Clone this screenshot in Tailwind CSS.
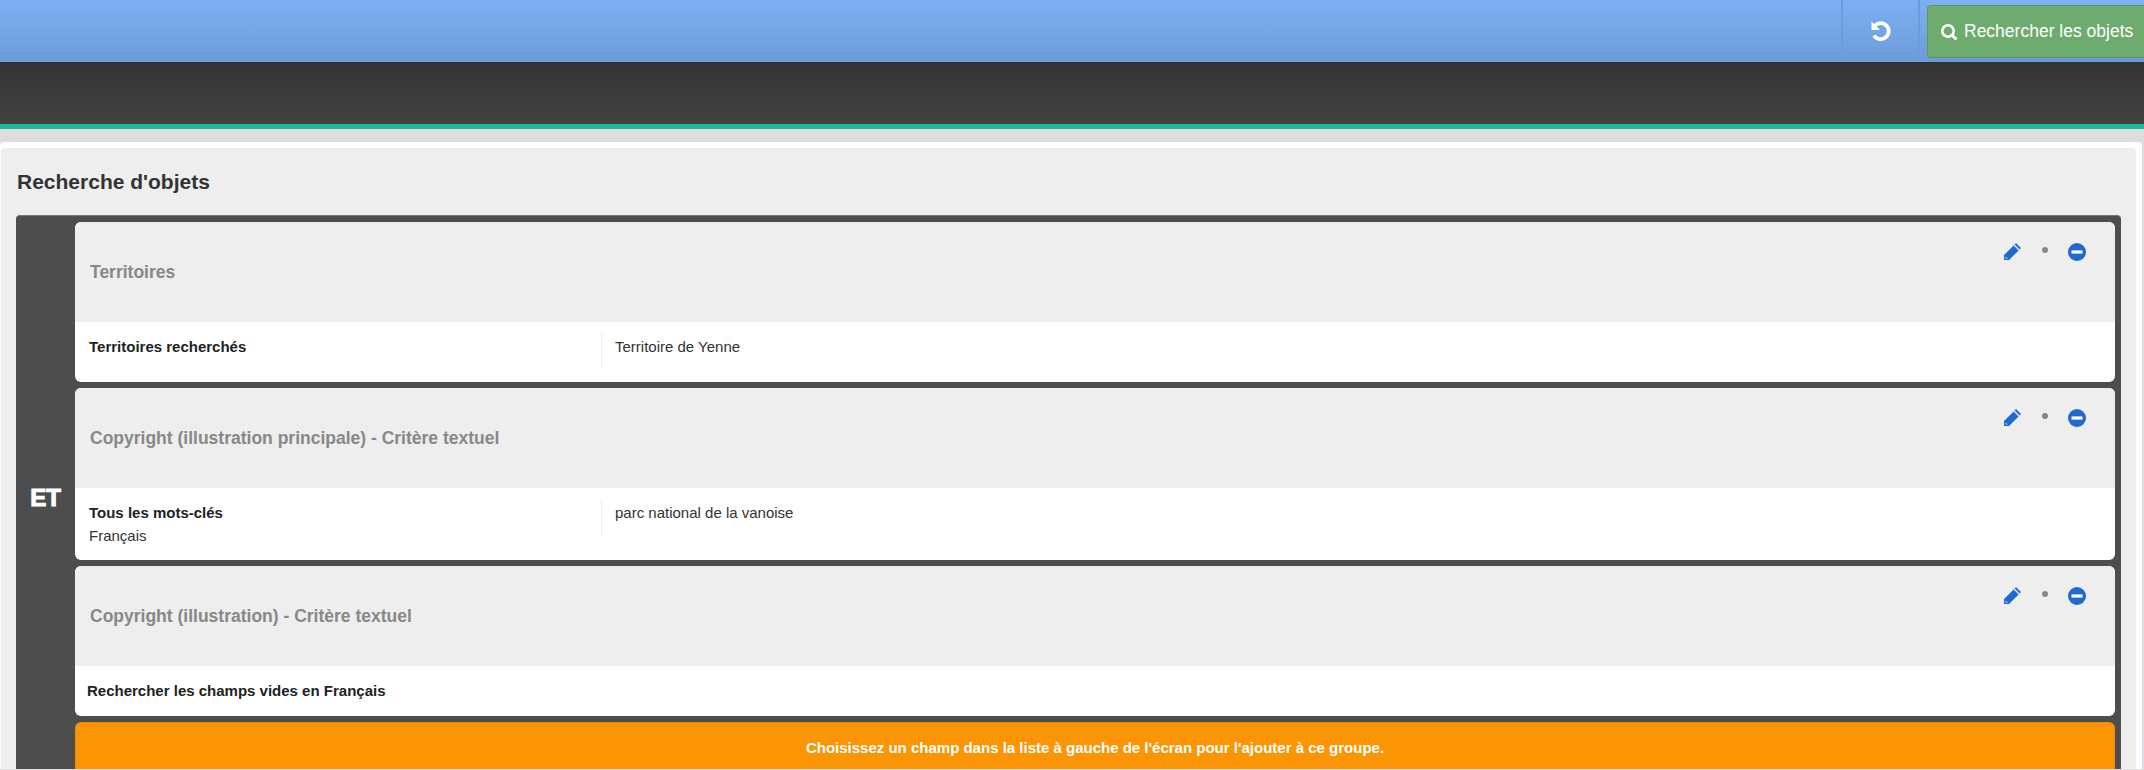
<!DOCTYPE html>
<html lang="fr">
<head>
    <meta charset="UTF-8">
    <title>Recherche d'objets</title>
    <script src="https://cdn.jsdelivr.net/npm/@tailwindcss/browser@4"></script>
</head>
<body class="h-[770px] overflow-hidden bg-[#ddd] font-['Liberation_Sans',Arial,sans-serif] text-[#333]">
    <!-- top bar -->
    <div class="h-[62px] flex justify-end bg-gradient-to-b from-[#7db0f2] to-[#6c9bd9]">
        <div class="w-[75px] h-full border-l-2 border-r-2 border-[#6a9de0] flex items-center justify-center box-content">
            <svg class="w-[22px] h-[22px]" viewBox="0 0 22 22" fill="none" stroke="white" stroke-width="3.8">
                <path d="M5 5.5 A8 8 0 1 1 4 15.5"/>
                <path d="M1.5 1.5 L1.5 10 L10 10 Z" fill="white" stroke="none"/>
            </svg>
        </div>
        <div class="pl-[7px] pt-[5px]">
            <button class="w-[217px] h-[53px] pl-[12px] flex items-center gap-[6px] bg-[#6eab6e] border border-[#5c9a5c] border-r-0 rounded-l-[4px] text-white text-[17.5px]">
                <svg class="w-[18px] h-[18px]" viewBox="0 0 18 18" fill="none" stroke="white">
                    <circle cx="8" cy="8" r="5.7" stroke-width="2.6"/>
                    <path d="M12.2 12.2 L16.5 16.5" stroke-width="3"/>
                </svg>
                Rechercher les objets
            </button>
        </div>
    </div>

    <!-- dark band -->
    <div class="h-[67px] bg-gradient-to-b from-[#333] to-[#424242] border-b-[5px] border-[#1abc9c]"></div>

    <!-- panel -->
    <div class="mt-[13px] mr-[2px] bg-white pt-[6px] pr-[6px] pl-[1px] rounded-t-[4px]">
        <div class="bg-[#eee] rounded-t-[4px] pl-[15px] pr-[15px]">
            <h2 class="h-[67px] flex items-center pl-[1px] text-[21px] font-bold leading-none">Recherche d'objets</h2>

            <div class="flex bg-[#4d4d4d] border-t border-[#777] rounded-t-[4px] pr-[6px] pt-[6px]">
                <div class="w-[59px] shrink-0 flex items-start justify-center pt-[264px]">
                    <span class="text-white text-[24px] font-black leading-none [-webkit-text-stroke:1px_white]">ET</span>
                </div>

                <div class="flex-1 flex flex-col gap-[6px]">
                    <!-- Territoires -->
                    <div class="rounded-[6px] overflow-hidden bg-white">
                        <div class="h-[100px] bg-[#eee] flex items-center justify-between pl-[15px]">
                            <h3 class="text-[17.5px] font-bold text-[#888]">Territoires</h3>
                            <div class="self-start pt-[20px] pr-[29px] flex items-center">
                                <svg class="w-[19px] h-[19px]" viewBox="0 0 19 19" fill="#1f69d0"><path d="M13 1 L18 6 L16.6 7.4 L11.6 2.4 Z M10.6 3.4 L15.6 8.4 L6 18 L1 18 L1 13 Z"/><path d="M2.6 14.5 L4.5 16.4 L2.6 16.4 Z" fill="white"/></svg>
                                <span class="w-[6px] h-[6px] rounded-full bg-[#888] mx-[20px] -mt-[3px]"></span>
                                <svg class="w-[18px] h-[18px]" viewBox="0 0 18 18"><circle cx="9" cy="9" r="9" fill="#1f69d0"/><rect x="3.5" y="7.4" width="11" height="3.2" fill="white"/></svg>
                            </div>
                        </div>
                        <div class="h-[60px] flex pt-[11px]">
                            <div class="w-[527px] h-[36px] pl-[14px] pt-[3px] border-r border-[#eee] text-[15px] font-bold text-[#222]">Territoires recherchés</div>
                            <div class="pl-[13px] pt-[3px] text-[15px]">Territoire de Yenne</div>
                        </div>
                    </div>

                    <!-- Copyright (illustration principale) -->
                    <div class="rounded-[6px] overflow-hidden bg-white">
                        <div class="h-[100px] bg-[#eee] flex items-center justify-between pl-[15px]">
                            <h3 class="text-[17.5px] font-bold text-[#888]">Copyright (illustration principale) - Critère textuel</h3>
                            <div class="self-start pt-[20px] pr-[29px] flex items-center">
                                <svg class="w-[19px] h-[19px]" viewBox="0 0 19 19" fill="#1f69d0"><path d="M13 1 L18 6 L16.6 7.4 L11.6 2.4 Z M10.6 3.4 L15.6 8.4 L6 18 L1 18 L1 13 Z"/><path d="M2.6 14.5 L4.5 16.4 L2.6 16.4 Z" fill="white"/></svg>
                                <span class="w-[6px] h-[6px] rounded-full bg-[#888] mx-[20px] -mt-[3px]"></span>
                                <svg class="w-[18px] h-[18px]" viewBox="0 0 18 18"><circle cx="9" cy="9" r="9" fill="#1f69d0"/><rect x="3.5" y="7.4" width="11" height="3.2" fill="white"/></svg>
                            </div>
                        </div>
                        <div class="h-[72px] flex pt-[11px]">
                            <div class="w-[527px] h-[36px] pl-[14px] pt-[2px] border-r border-[#eee] text-[15px] leading-[23px] text-[#222]">
                                <div class="font-bold">Tous les mots-clés</div>
                                <div class="text-[#333]">Français</div>
                            </div>
                            <div class="pl-[13px] pt-[2px] text-[15px] leading-[23px]">parc national de la vanoise</div>
                        </div>
                    </div>

                    <!-- Copyright (illustration) -->
                    <div class="rounded-[6px] overflow-hidden bg-white">
                        <div class="h-[100px] bg-[#eee] flex items-center justify-between pl-[15px]">
                            <h3 class="text-[17.5px] font-bold text-[#888]">Copyright (illustration) - Critère textuel</h3>
                            <div class="self-start pt-[20px] pr-[29px] flex items-center">
                                <svg class="w-[19px] h-[19px]" viewBox="0 0 19 19" fill="#1f69d0"><path d="M13 1 L18 6 L16.6 7.4 L11.6 2.4 Z M10.6 3.4 L15.6 8.4 L6 18 L1 18 L1 13 Z"/><path d="M2.6 14.5 L4.5 16.4 L2.6 16.4 Z" fill="white"/></svg>
                                <span class="w-[6px] h-[6px] rounded-full bg-[#888] mx-[20px] -mt-[3px]"></span>
                                <svg class="w-[18px] h-[18px]" viewBox="0 0 18 18"><circle cx="9" cy="9" r="9" fill="#1f69d0"/><rect x="3.5" y="7.4" width="11" height="3.2" fill="white"/></svg>
                            </div>
                        </div>
                        <div class="h-[50px] flex items-center pl-[12px] text-[15px] font-bold text-[#222]">Rechercher les champs vides en Français</div>
                    </div>

                    <!-- drop zone, cut by the bottom of the window -->
                    <div class="h-[47px] rounded-t-[6px] bg-[#fb9505] border border-b-0 border-dotted border-[#d98000] pt-[14px] text-center text-white text-[15px] font-bold">Choisissez un champ dans la liste à gauche de l'écran pour l'ajouter à ce groupe.</div>
                </div>
            </div>
        </div>
    </div>
</body>
</html>
